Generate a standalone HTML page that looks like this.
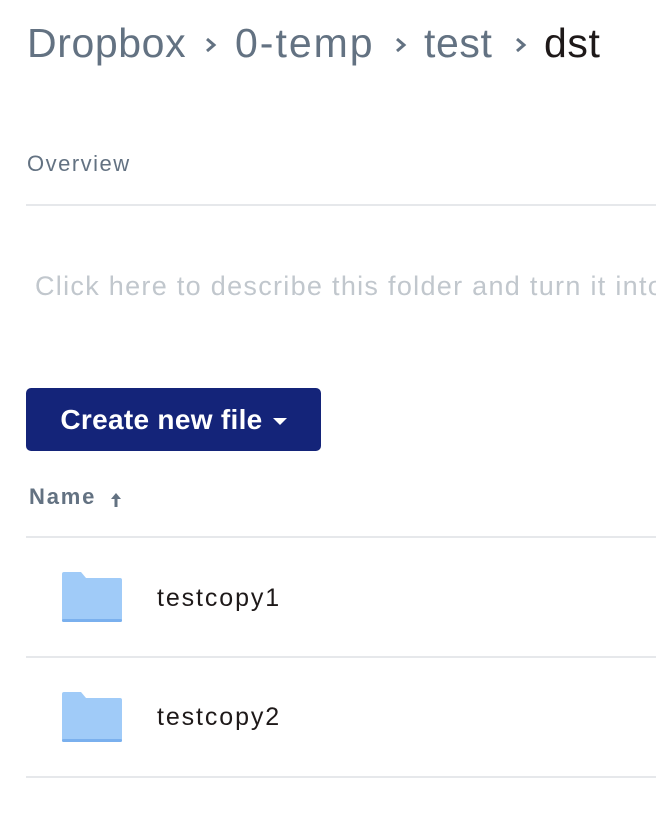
<!DOCTYPE html>
<html><head><style>
body{margin:0;width:656px;height:834px;overflow:hidden;background:#fff;font-family:"Liberation Sans",sans-serif;position:relative}
.a{position:absolute;white-space:nowrap}
.bc{position:absolute;top:20px;font-size:41px;color:#637282;letter-spacing:0.6px;white-space:nowrap}
.ch{position:absolute;top:36px}
.line{position:absolute;left:26px;right:0;height:2px;background:#e6e8eb}
.folder{position:absolute;left:62px;width:60px;height:50px}
</style></head><body>
<div class="bc" style="left:27px">Dropbox</div>
<svg class="ch" style="left:204px" width="14" height="18" viewBox="0 0 14 18"><path d="M3 3 L10 9 L3 15" fill="none" stroke="#637282" stroke-width="3"/></svg>
<div class="bc" style="left:235px;letter-spacing:2px">0-temp</div>
<svg class="ch" style="left:394px" width="14" height="18" viewBox="0 0 14 18"><path d="M3 3 L10 9 L3 15" fill="none" stroke="#637282" stroke-width="3"/></svg>
<div class="bc" style="left:424px">test</div>
<svg class="ch" style="left:514px" width="14" height="18" viewBox="0 0 14 18"><path d="M3 3 L10 9 L3 15" fill="none" stroke="#637282" stroke-width="3"/></svg>
<div class="bc" style="left:544px;color:#1e1919">dst</div>
<div class="a" style="left:27px;top:151px;font-size:22px;letter-spacing:1.5px;color:#637282">Overview</div>
<div class="line" style="top:204px"></div>
<div class="a" style="left:35px;top:271px;font-size:27px;letter-spacing:1.3px;color:#c1c7cd">Click here to describe this folder and turn it into</div>
<div class="a" style="left:26px;top:388px;width:295px;height:63px;background:#142479;border-radius:5px;color:#fff;font-weight:bold;font-size:28px;letter-spacing:0.3px;line-height:63px;text-align:center">Create new file <span style="display:inline-block;width:0;height:0;border-left:7px solid transparent;border-right:7px solid transparent;border-top:7px solid #fff;vertical-align:middle;margin-left:2px"></span></div>
<div class="a" style="left:29px;top:484px;font-size:22px;letter-spacing:1.8px;font-weight:bold;color:#637282">Name</div>
<svg class="a" style="left:109px;top:491px" width="14" height="18" viewBox="0 0 14 18"><path d="M7 2 L12 8 H8.5 V16 H5.5 V8 H2 Z" fill="#637282"/></svg>
<div class="line" style="top:536px"></div>
<svg class="folder" style="top:572px" viewBox="0 0 60 50"><path d="M0 2 Q0 0 2 0 H19 L24 6 H58 Q60 6 60 8 V48 Q60 50 58 50 H2 Q0 50 0 48 Z" fill="#a0cbf8"/><rect x="0" y="47" width="60" height="3" rx="1.5" fill="#7ab0ee"/></svg>
<div class="a" style="left:157px;top:584px;font-size:25px;letter-spacing:1.9px;color:#1e1919">testcopy1</div>
<div class="line" style="top:656px"></div>
<svg class="folder" style="top:692px" viewBox="0 0 60 50"><path d="M0 2 Q0 0 2 0 H19 L24 6 H58 Q60 6 60 8 V48 Q60 50 58 50 H2 Q0 50 0 48 Z" fill="#a0cbf8"/><rect x="0" y="47" width="60" height="3" rx="1.5" fill="#7ab0ee"/></svg>
<div class="a" style="left:157px;top:703px;font-size:25px;letter-spacing:1.9px;color:#1e1919">testcopy2</div>
<div class="line" style="top:776px"></div>
</body></html>
